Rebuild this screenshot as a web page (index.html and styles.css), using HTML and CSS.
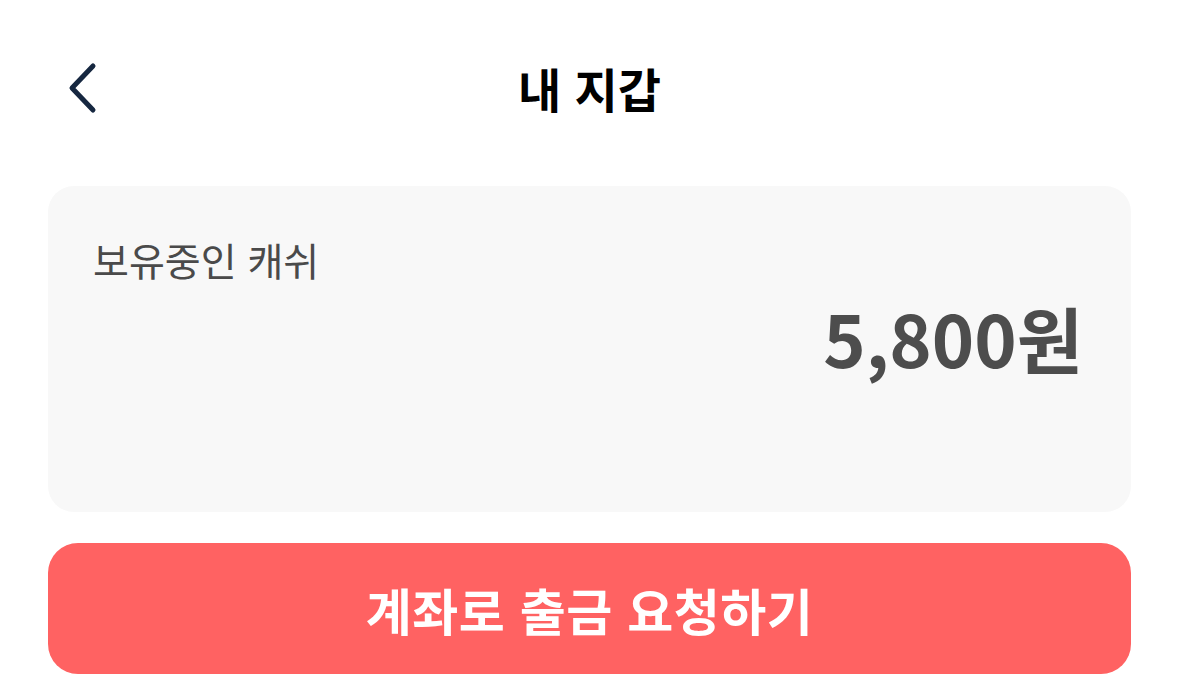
FILE: index.html
```html
<!DOCTYPE html>
<html lang="ko">
<head>
<meta charset="utf-8">
<link rel="stylesheet" href="styles.css">
</head>
<body>
<div class="page">
  <header class="topbar">
    <button class="back" aria-label="뒤로">
      <svg width="34" height="52" viewBox="0 0 34 52"><path d="M29 4 L8 26 L29 48" fill="none" stroke="#162740" stroke-width="5" stroke-linecap="round" stroke-linejoin="round"/></svg>
    </button>
    <h1 class="title">내 지갑</h1>
  </header>
  <section class="card">
    <div class="label">보유중인 캐쉬</div>
    <div class="amount">5,800원</div>
  </section>
  <button class="cta">계좌로 출금 요청하기</button>
</div>
</body>
</html>
```
FILE: styles.css
```css
html, body { margin: 0; padding: 0; background: #fff; }
body { font-family: "Noto Sans CJK KR", "Noto Sans", sans-serif; }
.page { padding: 0 48px; display: flex; flex-direction: column; }
.topbar { height: 186px; position: relative; display: flex; justify-content: center; align-items: flex-start; padding-top: 64px; box-sizing: border-box; }
.back { position: absolute; left: 16px; top: 62px; background: none; border: 0; padding: 0; width: 34px; height: 52px; cursor: pointer; }
.back svg { display: block; }
.title { margin: 0; font-size: 47px; font-weight: 700; color: #000; letter-spacing: 0; line-height: 1; }
.card { background: #f8f8f8; border-radius: 26px; height: 326px; box-sizing: border-box; padding: 54px 48px 0 45px; display: flex; flex-direction: column; }
.label { font-size: 39px; color: #4a4a4a; line-height: 1; letter-spacing: 0; }
.amount { align-self: flex-end; font-size: 72px; font-weight: 700; color: #4d4d4d; line-height: 1; margin-top: 22px; letter-spacing: 0; }
.cta { margin-top: 31px; height: 131px; border: 0; border-radius: 30px; background: #ff6262; color: #fff; font-family: "Noto Sans CJK KR", sans-serif; font-size: 50px; font-weight: 700; letter-spacing: 0.5px; line-height: 1; }
```
